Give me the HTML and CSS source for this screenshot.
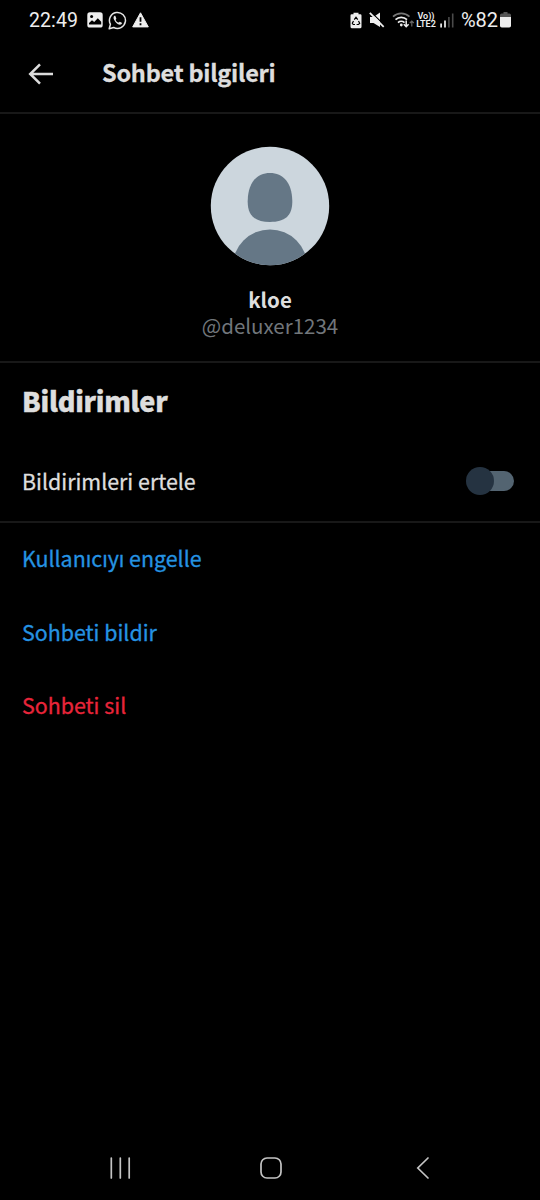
FILE: index.html
```html
<!DOCTYPE html>
<html lang="tr">
<head>
<meta charset="utf-8">
<title>Sohbet bilgileri</title>
<link rel="stylesheet" href="styles.css">
</head>
<body>
<div class="screen">
  <div class="status">
    <span class="clock">22:49</span>
    <svg class="s-image" width="16" height="16" viewBox="0 0 16 16"><rect x=".3" y=".3" width="15.4" height="15.2" rx="2.6" fill="#eee"/><circle cx="4.6" cy="4.6" r="1.5" fill="#000"/><path d="M2 12.5V11l3-2.8 2.2 1.8 3.6-3.7 3.4 3.4v2.8z" fill="#000"/></svg>
    <svg class="s-wa" width="19" height="19" viewBox="0 0 19 19"><path d="M1.2 17.8l1.2-4.6a8 8 0 1 1 3.3 3.3z" fill="none" stroke="#e6e6e6" stroke-width="1.5" stroke-linejoin="round"/><path d="M6.5 4.8c-1.6 1-1.2 3.5.8 5.9s4.500 3.700 6 2.500c.8-.6.8-1.300.5-1.500l-1.900-1c-.6-.2-.9.9-1.400.9-1-.2-2.500-1.700-2.900-2.700 0-.5.9-.8.700-1.500L7.400 5c-.2-.4-.6-.4-.9-.2z" fill="#e6e6e6"/></svg>
    <svg class="s-warn" width="17" height="16" viewBox="0 0 17 16"><path d="M8.500.8L16.300 14.900H.7z" fill="#eee" stroke="#eee" stroke-width="1" stroke-linejoin="round"/><path d="M8.500 5.200v4.600M8.500 11.300v2" stroke="#000" stroke-width="1.800"/></svg>
    <svg class="s-save" width="12" height="17" viewBox="0 0 12 17"><path d="M3.500.7h5v1.600h1.800q1.200 0 1.200 1.200v11.300q0 1.500-1.500 1.500H2q-1.500 0-1.500-1.500V3.500q0-1.200 1.200-1.200h1.800z" fill="#eee"/><path d="M4.300 7.700L6 5.200l1.700 2.500M8.500 9l1.200 2.300-1.200 1.200H6.600M5 12.500H3.200l-.9-1.200L3.500 9" fill="none" stroke="#000" stroke-width="1.200"/></svg>
    <svg class="s-mute" width="16" height="16" viewBox="0 0 16 16"><path d="M1 5.100h3.500L11 .5V15L4.500 11H1z" fill="#eee"/><path d="M1.700-.4L16 13.900" stroke="#000" stroke-width="1.200"/><path d="M.8.900L14.700 14.800" stroke="#eee" stroke-width="1.800"/></svg>
    <svg class="s-wifi" width="23" height="18" viewBox="0 0 23 18"><g fill="none" stroke-width="1.700"><path d="M1 5.700a12 12 0 0 1 16.500 0" stroke="#777"/><path d="M3.500 8.700a8.300 8.300 0 0 1 11.500 0M6 11.600a4.800 4.800 0 0 1 6.500 0" stroke="#eee"/><path d="M14.200 9.500v6M11.800 13.200l2.400 2.500 2.400-2.500" stroke="#eee" stroke-width="1.500"/><path d="M19.800 15.500v-5M17.800 12l2-2 2 2" stroke="#666" stroke-width="1.200"/></g><circle cx="9.300" cy="14" r="1.400" fill="#eee"/></svg>
    <div class="lte"><span class="vo">Vo))</span><span>LTE2</span></div>
    <svg class="s-signal" width="14" height="15" viewBox="0 0 14 15"><path d="M1.100 10.500v4M5 7.500v7" stroke="#eee" stroke-width="1.700"/><path d="M8.900 4v10.500M12.700.5v14" stroke="#4a4a4a" stroke-width="1.600"/></svg>
    <span class="percent">%82</span>
    <svg class="s-batt" width="11" height="16" viewBox="0 0 11 16"><path d="M3.500 0h4v1.500h1.800Q11 1.500 11 3v2H0V3q0-1.500 1.700-1.500h1.800z" fill="#555"/><path d="M0 5h11v8.700Q11 15.500 9.200 15.500H1.800Q0 15.500 0 13.700z" fill="#eee"/></svg>
  </div>

  <header class="bar">
    <svg class="back" width="26" height="22" viewBox="0 0 26 22"><path d="M25 11H2M12 1.300L2.200 11l9.800 9.700" fill="none" stroke="#dcdcdc" stroke-width="2.500"/></svg>
    <h1 class="title">Sohbet bilgileri</h1>
  </header>

  <section class="profile">
    <svg class="avatar" width="120" height="120" viewBox="0 0 120 120"><defs><clipPath id="disc"><circle cx="60" cy="60" r="59.200"/></clipPath></defs><g clip-path="url(#disc)"><rect width="120" height="120" fill="#ccd6dd"/><path d="M60 27c13 0 22 9.500 22.300 28 .2 15-7.300 21-22.300 21s-22.500-6-22.300-21C38 36.500 47 27 60 27z" fill="#657786"/><circle cx="60" cy="121" r="37.500" fill="#657786"/></g></svg>
    <div class="name">kloe</div>
    <div class="handle">@deluxer1234</div>
  </section>

  <section class="notifications">
    <h2 class="heading">Bildirimler</h2>
    <div class="setting">
      <span class="label">Bildirimleri ertele</span>
      <span class="switch"><span class="thumb"></span><span class="track"></span></span>
    </div>
  </section>

  <section class="actions">
    <div class="action block">Kullanıcıyı engelle</div>
    <div class="action report">Sohbeti bildir</div>
    <div class="action delete">Sohbeti sil</div>
  </section>

  <nav class="nav">
    <svg width="22" height="24" viewBox="0 0 22 24"><path d="M2.300 2v20M11.300 2v20M20.200 2v20" stroke="#c4c4c4" stroke-width="1.700" stroke-linecap="round"/></svg>
    <svg class="home" width="24" height="24" viewBox="0 0 24 24"><rect x="2" y="2" width="20" height="20" rx="6" fill="none" stroke="#c4c4c4" stroke-width="1.700"/></svg>
    <svg width="14" height="24" viewBox="0 0 14 24"><path d="M12 2L1.800 12 12 22" fill="none" stroke="#c4c4c4" stroke-width="1.700" stroke-linecap="round"/></svg>
  </nav>
</div>
</body>
</html>
```
FILE: styles.css
```css
* { box-sizing: border-box; }
body { margin: 0; background: #000; }
h1, h2 { margin: 0; }
svg { display: block; flex: none; }
.screen {
  width: 540px;
  height: 1200px;
  display: flex;
  flex-direction: column;
  background: #000;
  color: #dedede;
  font-family: "Noto Sans CJK SC", "Noto Sans", sans-serif;
  white-space: nowrap;
}
.status {
  height: 40px;
  display: flex;
  align-items: center;
  padding-left: 29px;
  font-family: Roboto, sans-serif;
  color: #eee;
}
.clock { width: 58px; font-size: 19.5px; letter-spacing: 0.1px; }
.s-wa { margin-left: 5px; }
.s-warn { margin-left: 5px; }
.s-save { margin-left: 201px; }
.s-mute { margin-left: 7px; }
.s-wifi { margin-left: 7px; }
.lte {
  width: 20px;
  margin-left: 1px;
  display: flex;
  flex-direction: column;
  align-items: center;
  font-size: 9px;
  line-height: 8.5px;
  font-weight: 600;
}
.s-signal { margin-left: 4px; }
.percent { width: 38px; margin-left: 7px; font-size: 20px; letter-spacing: -0.1px; }
.s-batt { margin-left: 1px; }
.bar {
  height: 74px;
  display: flex;
  align-items: center;
  padding: 0 0 4px 28px;
  border-bottom: 2px solid #181818;
}
.title {
  margin-left: 48px;
  padding-bottom: 4px;
  font-size: 23.5px;
  line-height: 34px;
  font-weight: 700;
  letter-spacing: -0.25px;
  -webkit-text-stroke: 0.3px;
}
.profile {
  height: 249px;
  display: flex;
  flex-direction: column;
  align-items: center;
  padding-top: 32px;
  border-bottom: 2px solid #181818;
}
.name { margin-top: 20px; font-size: 20.5px; line-height: 26px; font-weight: 700; }
.handle { font-size: 20.5px; line-height: 26px; color: #71767b; }
.notifications { height: 160px; border-bottom: 2px solid #181818; }
.heading {
  height: 79px;
  padding-left: 22px;
  font-size: 27px;
  line-height: 76px;
  font-weight: 900;
  letter-spacing: -0.25px;
  -webkit-text-stroke: 0.4px;
}
.setting {
  height: 79px;
  display: flex;
  align-items: center;
  justify-content: space-between;
  padding: 0 26px 1px 22px;
  font-size: 21.4px;
}
.label { line-height: 32px; padding-bottom: 1px; -webkit-text-stroke: 0.3px; }
.switch { display: flex; align-items: center; }
.thumb { width: 28px; height: 28px; border-radius: 50%; background: #253341; z-index: 1; }
.track {
  width: 38px;
  height: 20px;
  margin-left: -18px;
  border-radius: 10px;
  background: #536471;
}
.actions { padding-left: 22px; font-size: 21.4px; -webkit-text-stroke: 0.3px; }
.action { height: 73.5px; line-height: 70px; color: #2593e2; }
.delete { color: #e9253a; }
.nav {
  height: 64px;
  margin-top: auto;
  display: flex;
  align-items: center;
  justify-content: space-between;
  padding: 0 110px 0 109px;
}
.home { margin-right: 6px; }
```
